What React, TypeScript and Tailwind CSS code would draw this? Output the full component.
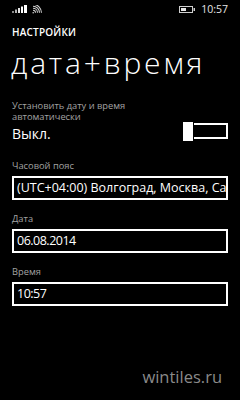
const FONT = { fontFamily: '"Open Sans", "Noto Sans", sans-serif' };

const SignalIcon = () => (
  <svg width="16" height="8" viewBox="0 0 16 8">
    <rect x="0" y="6" width="2" height="2" fill="#8a8a8a" />
    <rect x="3" y="4.5" width="2" height="3.5" fill="#b5b5b5" />
    <rect x="6" y="3" width="2" height="5" fill="#e5e5e5" />
    <rect x="9" y="1.5" width="2" height="6.5" fill="#fff" />
    <rect x="12" y="0" width="3" height="8" fill="#fff" />
  </svg>
);

const WifiIcon = () => (
  <svg width="11" height="9" viewBox="0 0 11 9" fill="none" stroke="#cfcfcf" strokeWidth="1.1">
    <circle cx="1.2" cy="7.8" r="0.8" fill="#cfcfcf" stroke="none" />
    <path d="M1 5.3 A2.5 2.5 0 0 1 3.5 7.8" />
    <path d="M1 3.3 A4.5 4.5 0 0 1 5.5 7.8" />
    <path d="M1 1.3 A6.5 6.5 0 0 1 7.5 7.8" />
    <path d="M1 -0.7 A8.5 8.5 0 0 1 9.5 7.8" />
  </svg>
);

const BatteryIcon = () => (
  <svg width="16" height="7" viewBox="0 0 16 7">
    <rect x="0.5" y="0.5" width="13" height="6" fill="none" stroke="#cfcfcf" strokeWidth="1" />
    <rect x="2" y="2" width="5" height="3" fill="#e5e5e5" />
    <rect x="14.5" y="2" width="1.5" height="3" fill="#cfcfcf" />
  </svg>
);

const Field = ({ label, value, tight }: { label: string; value: string; tight?: boolean }) => (
  <div className="flex flex-col">
    <div className="text-[9.3px] leading-[12px] text-[#a3a3a3]">{label}</div>
    <div className="mt-[4px] h-[24px] w-[216px] border-2 border-white flex items-center px-[3px] overflow-hidden">
      <span
        className={
          tight
            ? 'text-[12.5px] leading-[16px] whitespace-nowrap tracking-[-0.5px]'
            : 'text-[12.5px] leading-[16px] whitespace-nowrap'
        }
      >
        {value}
      </span>
    </div>
  </div>
);

const App = () => {
  return (
    <div className="relative w-[240px] h-[400px] bg-black text-white overflow-hidden" style={FONT}>
      <div className="h-[18px] flex items-center px-[12px]">
        <SignalIcon />
        <div className="ml-[4px] flex">
          <WifiIcon />
        </div>
        <div className="ml-auto flex items-center gap-[6px]">
          <BatteryIcon />
          <span className="text-[10.5px] leading-[12px] text-[#e5e5e5]">10:57</span>
        </div>
      </div>

      <div className="px-[12px] mt-[8px]">
        <div className="text-[10px] leading-[12px] font-semibold tracking-[0.2px]">НАСТРОЙКИ</div>
        <div className="text-[30px] leading-[36px] font-light mt-[7px] -ml-[1px] tracking-[2.8px]">дата+время</div>

        <div className="mt-[19px] text-[9.3px] leading-[11px] text-[#a3a3a3] w-[150px]">
          Установить дату и время автоматически
        </div>
        <div className="flex items-start h-[20px]">
          <span className="mt-[3px] text-[14px] leading-[18px]">Выкл.</span>
          <div className="ml-auto mt-[1px] relative w-[45px] h-[16px] border-2 border-white">
            <div className="absolute -left-[2px] -top-[3px] w-[10px] h-[19px] bg-white outline-[1.5px] outline-black" />
          </div>
        </div>

        <div className="mt-[18px] flex flex-col gap-[13px]">
          <Field label="Часовой пояс" value="(UTC+04:00) Волгоград, Москва, Санкт-Петербург" />
          <Field label="Дата" value="06.08.2014" tight />
          <Field label="Время" value="10:57" tight />
        </div>
      </div>

      <div className="absolute right-[18px] top-[367px] text-[16.5px] leading-[20px] text-[#8a8a8a]">wintiles.ru</div>
    </div>
  );
};

export default App;
